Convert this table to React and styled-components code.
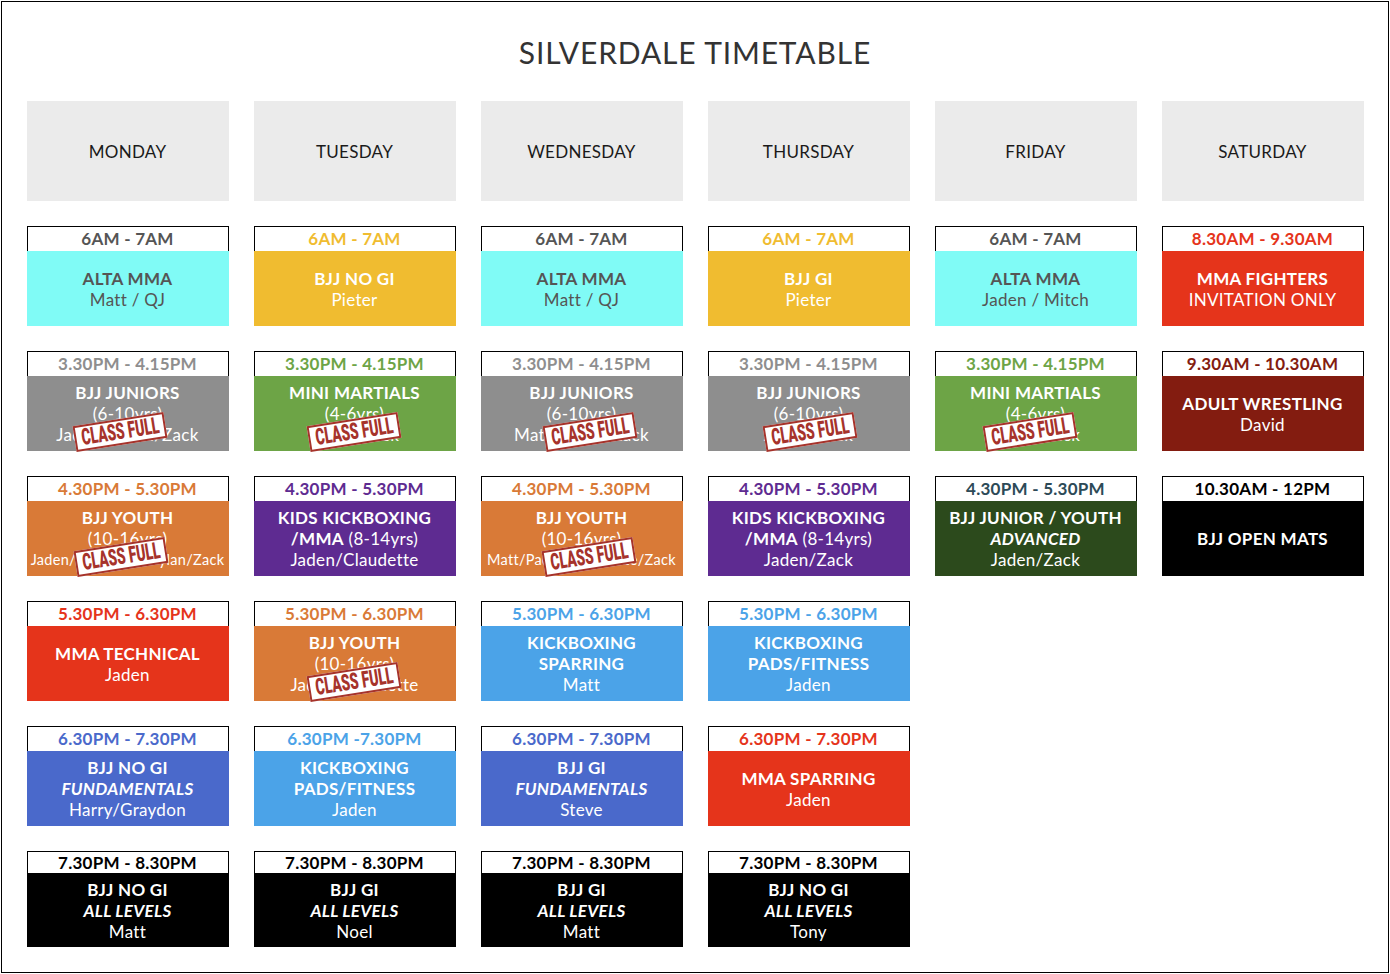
import React from 'react';
import styled, { createGlobalStyle } from 'styled-components';

const GlobalStyle = createGlobalStyle`
  html, body {
    margin: 0;
    padding: 0;
    background: #fff;
  }
  body {
    font-family: Lato, "Open Sans", sans-serif;
  }
`;

const C = {
  cyan: '#80fbf6',
  yellow: '#f0bc30',
  gray: '#8e8e8e',
  green: '#6da446',
  orange: '#d97a37',
  purple: '#5e2b91',
  red: '#e5341b',
  maroon: '#831c10',
  forest: '#2c4a1c',
  black: '#000000',
  sky: '#4ba3e8',
  royal: '#4a69cb',
};

const T = ({ children }) => <Line $bold>{children}</Line>;
const I = ({ children }) => <Line $bold $italic>{children}</Line>;
const N = ({ children }) => <Line>{children}</Line>;
const S = ({ children }) => <Line $small>{children}</Line>;

const days = [
  {
    name: 'MONDAY',
    classes: [
      { time: '6AM - 7AM', bg: C.cyan, tc: '#555', fg: '#555', lines: [<T>ALTA MMA</T>, <N>Matt / QJ</N>] },
      { time: '3.30PM - 4.15PM', bg: C.gray, tc: C.gray, lines: [<T>BJJ JUNIORS</T>, <N>(6-10yrs)</N>, <N>Jaden/Dylan/Zack</N>], stamp: 93 },
      { time: '4.30PM - 5.30PM', bg: C.orange, tc: C.orange, lines: [<T>BJJ YOUTH</T>, <N>(10-16yrs)</N>, <S>Jaden/Claudette/Dylan/Zack</S>], stamp: 94 },
      { time: '5.30PM - 6.30PM', bg: C.red, tc: C.red, lines: [<T>MMA TECHNICAL</T>, <N>Jaden</N>] },
      { time: '6.30PM - 7.30PM', bg: C.royal, tc: C.royal, lines: [<T>BJJ NO GI</T>, <I>FUNDAMENTALS</I>, <N>Harry/Graydon</N>] },
      { time: '7.30PM - 8.30PM', bg: C.black, tc: C.black, compact: true, lines: [<T>BJJ NO GI</T>, <I>ALL LEVELS</I>, <N>Matt</N>] },
    ],
  },
  {
    name: 'TUESDAY',
    classes: [
      { time: '6AM - 7AM', bg: C.yellow, tc: C.yellow, lines: [<T>BJJ NO GI</T>, <N>Pieter</N>] },
      { time: '3.30PM - 4.15PM', bg: C.green, tc: C.green, lines: [<T>MINI MARTIALS</T>, <N>(4-6yrs)</N>, <N>Jaden/Zack</N>], stamp: 100 },
      {
        time: '4.30PM - 5.30PM', bg: C.purple, tc: C.purple,
        lines: [<T>KIDS KICKBOXING</T>, <N><b>/MMA</b> (8-14yrs)</N>, <N>Jaden/Claudette</N>],
      },
      { time: '5.30PM - 6.30PM', bg: C.orange, tc: C.orange, lines: [<T>BJJ YOUTH</T>, <N>(10-16yrs)</N>, <N>Jaden/Claudette</N>], stamp: 100 },
      { time: '6.30PM -7.30PM', bg: C.sky, tc: C.sky, lines: [<T>KICKBOXING</T>, <T>PADS/FITNESS</T>, <N>Jaden</N>] },
      { time: '7.30PM - 8.30PM', bg: C.black, tc: C.black, compact: true, lines: [<T>BJJ GI</T>, <I>ALL LEVELS</I>, <N>Noel</N>] },
    ],
  },
  {
    name: 'WEDNESDAY',
    classes: [
      { time: '6AM - 7AM', bg: C.cyan, tc: '#555', fg: '#555', lines: [<T>ALTA MMA</T>, <N>Matt / QJ</N>] },
      { time: '3.30PM - 4.15PM', bg: C.gray, tc: C.gray, lines: [<T>BJJ JUNIORS</T>, <N>(6-10yrs)</N>, <N>Matt/Dylan/Zack</N>], stamp: 109 },
      { time: '4.30PM - 5.30PM', bg: C.orange, tc: C.orange, lines: [<T>BJJ YOUTH</T>, <N>(10-16yrs)</N>, <S>Matt/Paddy/Claudette/Zack</S>], stamp: 108 },
      { time: '5.30PM - 6.30PM', bg: C.sky, tc: C.sky, lines: [<T>KICKBOXING</T>, <T>SPARRING</T>, <N>Matt</N>] },
      { time: '6.30PM - 7.30PM', bg: C.royal, tc: C.royal, lines: [<T>BJJ GI</T>, <I>FUNDAMENTALS</I>, <N>Steve</N>] },
      { time: '7.30PM - 8.30PM', bg: C.black, tc: C.black, compact: true, lines: [<T>BJJ GI</T>, <I>ALL LEVELS</I>, <N>Matt</N>] },
    ],
  },
  {
    name: 'THURSDAY',
    classes: [
      { time: '6AM - 7AM', bg: C.yellow, tc: C.yellow, lines: [<T>BJJ GI</T>, <N>Pieter</N>] },
      { time: '3.30PM - 4.15PM', bg: C.gray, tc: C.gray, lines: [<T>BJJ JUNIORS</T>, <N>(6-10yrs)</N>, <N>Jaden/Zack</N>], stamp: 102 },
      {
        time: '4.30PM - 5.30PM', bg: C.purple, tc: C.purple,
        lines: [<T>KIDS KICKBOXING</T>, <N><b>/MMA</b> (8-14yrs)</N>, <N>Jaden/Zack</N>],
      },
      { time: '5.30PM - 6.30PM', bg: C.sky, tc: C.sky, lines: [<T>KICKBOXING</T>, <T>PADS/FITNESS</T>, <N>Jaden</N>] },
      { time: '6.30PM - 7.30PM', bg: C.red, tc: C.red, lines: [<T>MMA SPARRING</T>, <N>Jaden</N>] },
      { time: '7.30PM - 8.30PM', bg: C.black, tc: C.black, compact: true, lines: [<T>BJJ NO GI</T>, <I>ALL LEVELS</I>, <N>Tony</N>] },
    ],
  },
  {
    name: 'FRIDAY',
    classes: [
      { time: '6AM - 7AM', bg: C.cyan, tc: '#555', fg: '#555', lines: [<T>ALTA MMA</T>, <N>Jaden / Mitch</N>] },
      { time: '3.30PM - 4.15PM', bg: C.green, tc: C.green, lines: [<T>MINI MARTIALS</T>, <N>(4-6yrs)</N>, <N>Jaden/Zack</N>], stamp: 95 },
      { time: '4.30PM - 5.30PM', bg: C.forest, tc: '#2d4a57', lines: [<T>BJJ JUNIOR / YOUTH</T>, <I>ADVANCED</I>, <N>Jaden/Zack</N>] },
    ],
  },
  {
    name: 'SATURDAY',
    classes: [
      { time: '8.30AM - 9.30AM', bg: C.red, tc: C.red, lines: [<T>MMA FIGHTERS</T>, <N>INVITATION ONLY</N>] },
      { time: '9.30AM - 10.30AM', bg: C.maroon, tc: C.maroon, lines: [<T>ADULT WRESTLING</T>, <N>David</N>] },
      { time: '10.30AM - 12PM', bg: C.black, tc: C.black, lines: [<T>BJJ OPEN MATS</T>] },
    ],
  },
];

export default function App() {
  return (
    <>
      <GlobalStyle />
      <Page>
        <Title>SILVERDALE TIMETABLE</Title>
        <Grid>
          {days.map((day) => (
            <Column key={day.name}>
              <DayHeader>{day.name}</DayHeader>
              {day.classes.map((c, i) => (
                <Card key={i}>
                  <TimeLabel $color={c.tc} $compact={c.compact}>{c.time}</TimeLabel>
                  <Body $bg={c.bg} $fg={c.fg} $compact={c.compact}>
                    {c.lines.map((l, j) => (
                      <React.Fragment key={j}>{l}</React.Fragment>
                    ))}
                    {c.stamp && (
                      <Stamp style={{ left: c.stamp }}>
                        <StampText>CLASS FULL</StampText>
                      </Stamp>
                    )}
                  </Body>
                </Card>
              ))}
            </Column>
          ))}
        </Grid>
      </Page>
    </>
  );
}

const Page = styled.div`
  box-sizing: border-box;
  width: 1388px;
  height: 972px;
  margin: 1px;
  border: 1px solid #000;
  display: flex;
  flex-direction: column;
  align-items: center;
`;

const Title = styled.h1`
  margin: 0;
  height: 99px;
  display: flex;
  align-items: center;
  justify-content: center;
  font-size: 30px;
  font-weight: 400;
  color: #333;
  letter-spacing: 0.85px;
`;

const Grid = styled.div`
  display: grid;
  grid-template-columns: repeat(6, 202px);
  column-gap: 25px;
  align-items: start;
`;

const Column = styled.div`
  display: flex;
  flex-direction: column;
  gap: 25px;
`;

const DayHeader = styled.div`
  height: 100px;
  background: #ebebeb;
  display: flex;
  align-items: center;
  justify-content: center;
  font-size: 17px;
  letter-spacing: 0.3px;
  color: #1a1a1a;
`;

const Card = styled.div`
  display: flex;
  flex-direction: column;
`;

const TimeLabel = styled.div`
  box-sizing: border-box;
  height: ${(p) => (p.$compact ? '22px' : '25px')};
  border: 1px solid #000;
  border-bottom: 0;
  display: flex;
  align-items: center;
  justify-content: center;
  padding-bottom: ${(p) => (p.$compact ? '0' : '2px')};
  font-size: 17px;
  font-weight: 700;
  letter-spacing: 0.25px;
  color: ${(p) => p.$color};
`;

const Body = styled.div`
  position: relative;
  height: ${(p) => (p.$compact ? '74px' : '75px')};
  background: ${(p) => p.$bg};
  color: ${(p) => p.$fg || '#fff'};
  display: flex;
  flex-direction: column;
  align-items: center;
  justify-content: center;
  text-align: center;
`;

const Line = styled.div`
  line-height: 21px;
  font-size: ${(p) => (p.$small ? '14.5px' : '17px')};
  font-weight: ${(p) => (p.$bold ? 700 : 400)};
  font-style: ${(p) => (p.$italic ? 'italic' : 'normal')};
  letter-spacing: 0.3px;
  white-space: nowrap;
`;

const Stamp = styled.div`
  position: absolute;
  top: 56px;
  width: 92px;
  height: 26px;
  box-sizing: border-box;
  border: 2.5px solid #a6332b;
  background: #fff;
  display: flex;
  align-items: center;
  justify-content: center;
  overflow: hidden;
  transform: translate(-50%, -50%) rotate(-9deg);
`;

const StampText = styled.span`
  display: inline-block;
  white-space: nowrap;
  font-family: Roboto, "Liberation Sans", sans-serif;
  font-weight: 900;
  font-size: 23px;
  line-height: 22px;
  color: #a6332b;
  transform: scaleX(0.6);
`;
